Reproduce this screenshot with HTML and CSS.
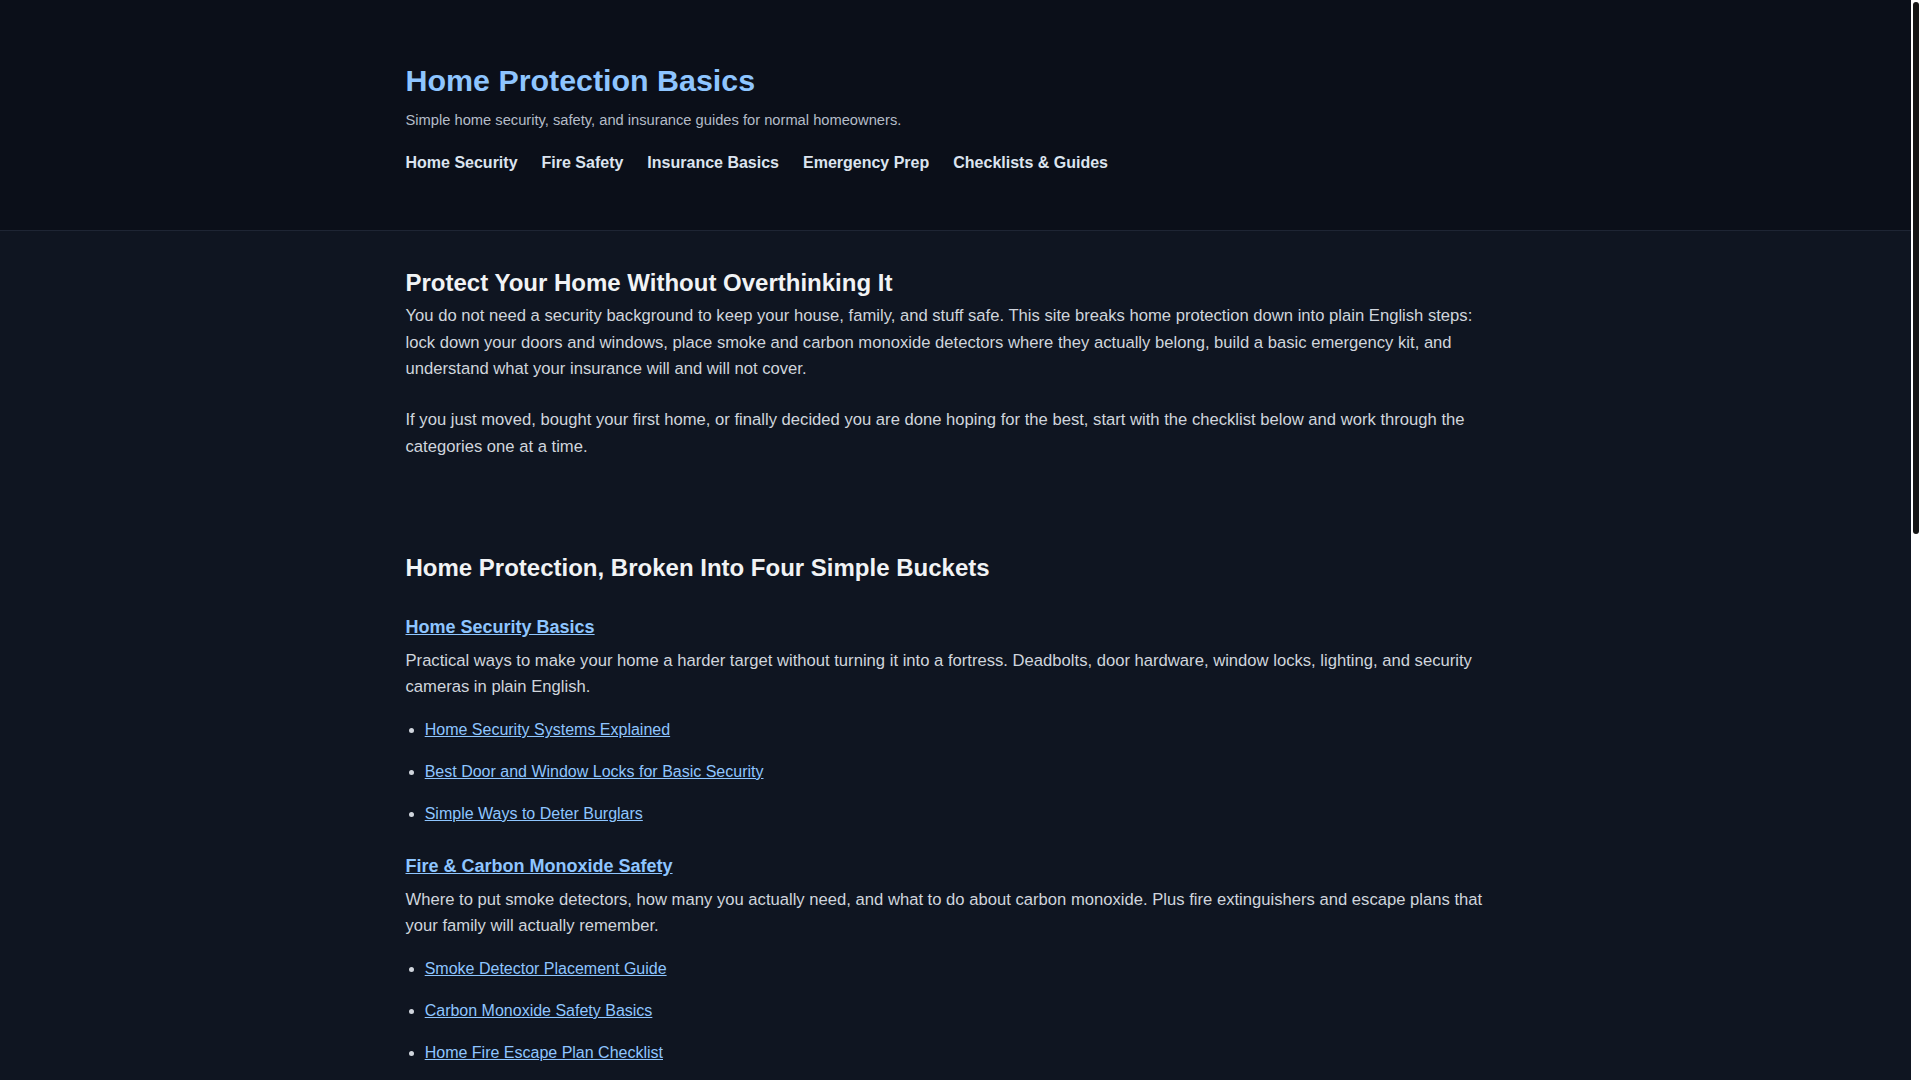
FILE: index.html
```html
<!DOCTYPE html>
<html lang="en">
<head>
<meta charset="utf-8">
<title>Home Protection Basics</title>
<link rel="stylesheet" href="styles.css">
</head>
<body>
<header class="site-header">
  <div class="container">
    <a class="brand" href="#">Home Protection Basics</a>
    <p class="tagline">Simple home security, safety, and insurance guides for normal homeowners.</p>
    <nav class="nav">
      <a href="#">Home Security</a>
      <a href="#">Fire Safety</a>
      <a href="#">Insurance Basics</a>
      <a href="#">Emergency Prep</a>
      <a href="#">Checklists &amp; Guides</a>
    </nav>
  </div>
</header>

<main class="container main">
  <section class="hero">
    <h2 class="section-title hero-title">Protect Your Home Without Overthinking It</h2>
    <p>You do not need a security background to keep your house, family, and stuff safe. This site breaks home protection down into plain English steps: lock down your doors and windows, place smoke and carbon monoxide detectors where they actually belong, build a basic emergency kit, and understand what your insurance will and will not cover.</p>
    <p>If you just moved, bought your first home, or finally decided you are done hoping for the best, start with the checklist below and work through the categories one at a time.</p>
  </section>

  <section class="buckets">
    <h2 class="section-title">Home Protection, Broken Into Four Simple Buckets</h2>

    <div class="bucket">
      <h3><a href="#">Home Security Basics</a></h3>
      <p>Practical ways to make your home a harder target without turning it into a fortress. Deadbolts, door hardware, window locks, lighting, and security cameras in plain English.</p>
      <ul>
        <li><a href="#">Home Security Systems Explained</a></li>
        <li><a href="#">Best Door and Window Locks for Basic Security</a></li>
        <li><a href="#">Simple Ways to Deter Burglars</a></li>
      </ul>
    </div>

    <div class="bucket">
      <h3><a href="#">Fire &amp; Carbon Monoxide Safety</a></h3>
      <p>Where to put smoke detectors, how many you actually need, and what to do about carbon monoxide. Plus fire extinguishers and escape plans that your family will actually remember.</p>
      <ul>
        <li><a href="#">Smoke Detector Placement Guide</a></li>
        <li><a href="#">Carbon Monoxide Safety Basics</a></li>
        <li><a href="#">Home Fire Escape Plan Checklist</a></li>
      </ul>
    </div>

    <div class="bucket">
      <h3><a href="#">Homeowners Insurance Basics</a></h3>
      <p>What a standard homeowners policy covers, what it leaves out, and how deductibles, limits, and replacement cost really work when something goes wrong at your house.</p>
      <ul>
        <li><a href="#">Homeowners Insurance Explained</a></li>
        <li><a href="#">What Homeowners Insurance Does Not Cover</a></li>
        <li><a href="#">How to Make a Home Inventory</a></li>
      </ul>
    </div>

    <div class="bucket">
      <h3><a href="#">Emergency Prep</a></h3>
      <p>Build a basic emergency kit, plan for power outages, storms, and water shutoffs, and know where your main shutoffs are before you need them in a hurry.</p>
      <ul>
        <li><a href="#">Basic Home Emergency Kit Checklist</a></li>
        <li><a href="#">How to Prepare for a Power Outage</a></li>
        <li><a href="#">Finding Your Water and Gas Shutoffs</a></li>
      </ul>
    </div>
  </section>

  <section class="checklist">
    <h2 class="section-title">Start Here: A Simple Home Protection Checklist</h2>
    <p>Work through these one weekend at a time. You do not have to do everything at once.</p>
    <ol>
      <li>Rekey or replace the locks on every exterior door.</li>
      <li>Add deadbolts with long strike plate screws to front and back doors.</li>
      <li>Check that every window latch actually locks.</li>
      <li>Install smoke detectors in every bedroom, outside sleeping areas, and on every level.</li>
      <li>Add carbon monoxide detectors near bedrooms and on every level.</li>
      <li>Put a fire extinguisher in the kitchen and garage.</li>
      <li>Build a basic emergency kit with water, food, flashlights, and batteries.</li>
      <li>Review your homeowners insurance policy and make a home inventory.</li>
    </ol>
  </section>
</main>

<footer class="site-footer">
  <div class="container">
    <p>&copy; Home Protection Basics. Plain English guides for normal homeowners.</p>
  </div>
</footer>

<div class="scrollbar" aria-hidden="true"><div class="scrollbar-thumb"></div></div>
</body>
</html>
```

FILE: styles.css
```css
html, body {
  margin: 0;
  padding: 0;
}

body {
  background: #0f1521;
  color: #d0d5dd;
  font-family: "Liberation Sans", Arial, sans-serif;
  padding-right: 9px;
}

a {
  color: #8ec5ff;
}

/* Window scrollbar strip */
.scrollbar {
  position: fixed;
  top: 0;
  right: 0;
  bottom: 0;
  width: 9px;
  background: #ffffff;
  z-index: 10;
}

.scrollbar-thumb {
  position: absolute;
  top: 2px;
  left: 1.5px;
  width: 6.5px;
  height: 532px;
  border-radius: 3.5px;
  background: #151515;
}

.container {
  box-sizing: border-box;
  max-width: 1100px;
  padding-right: 4px;
  margin: 0 auto;
}

/* Header */
.site-header {
  background: #0b0f19;
  border-bottom: 1px solid #1e2534;
  padding: 62px 0 55px;
}

.brand {
  display: block;
  font-size: 30.4px;
  line-height: 1.2;
  font-weight: 700;
  color: #8ec5ff;
  text-decoration: none;
}

.tagline {
  margin: 10.5px 0 0;
  font-size: 14.7px;
  line-height: 1.6;
  color: #b4bcc8;
}

.nav {
  display: flex;
  gap: 24px;
  margin-top: 17px;
}

.nav a {
  font-size: 16px;
  line-height: 1.6;
  font-weight: 700;
  color: #dce4ef;
  text-decoration: none;
}

/* Main */
.main {
  padding-top: 32.5px;
}

.section-title {
  margin: 0;
  font-size: 24px;
  line-height: 1.6;
  font-weight: 700;
  color: #f1f3f5;
}

.hero-title {
  margin-bottom: 1px;
}

.main p {
  margin: 0;
  font-size: 16.64px;
  line-height: 1.6;
}

.hero p + p {
  margin-top: 24.5px;
}

.buckets,
.checklist {
  margin-top: 88.3px;
}

.bucket {
  margin-top: 25.5px;
}

.bucket h3 {
  margin: 0 0 6.2px;
  font-size: 18px;
  line-height: 1.6;
  font-weight: 700;
}

.bucket ul,
.checklist ol {
  margin: 16.4px 0 0;
  padding-left: 19.2px;
}

.checklist ol {
  padding-left: 24px;
}

.bucket li,
.checklist li {
  font-size: 16px;
  line-height: 1.6;
}

.bucket li + li,
.checklist li + li {
  margin-top: 16px;
}

/* Footer */
.site-footer {
  margin-top: 72px;
  border-top: 1px solid #1e2534;
  background: #0b0f19;
  padding: 32px 0 40px;
}

.site-footer p {
  margin: 0;
  font-size: 14.7px;
  line-height: 1.6;
  color: #8b94a3;
}
```
